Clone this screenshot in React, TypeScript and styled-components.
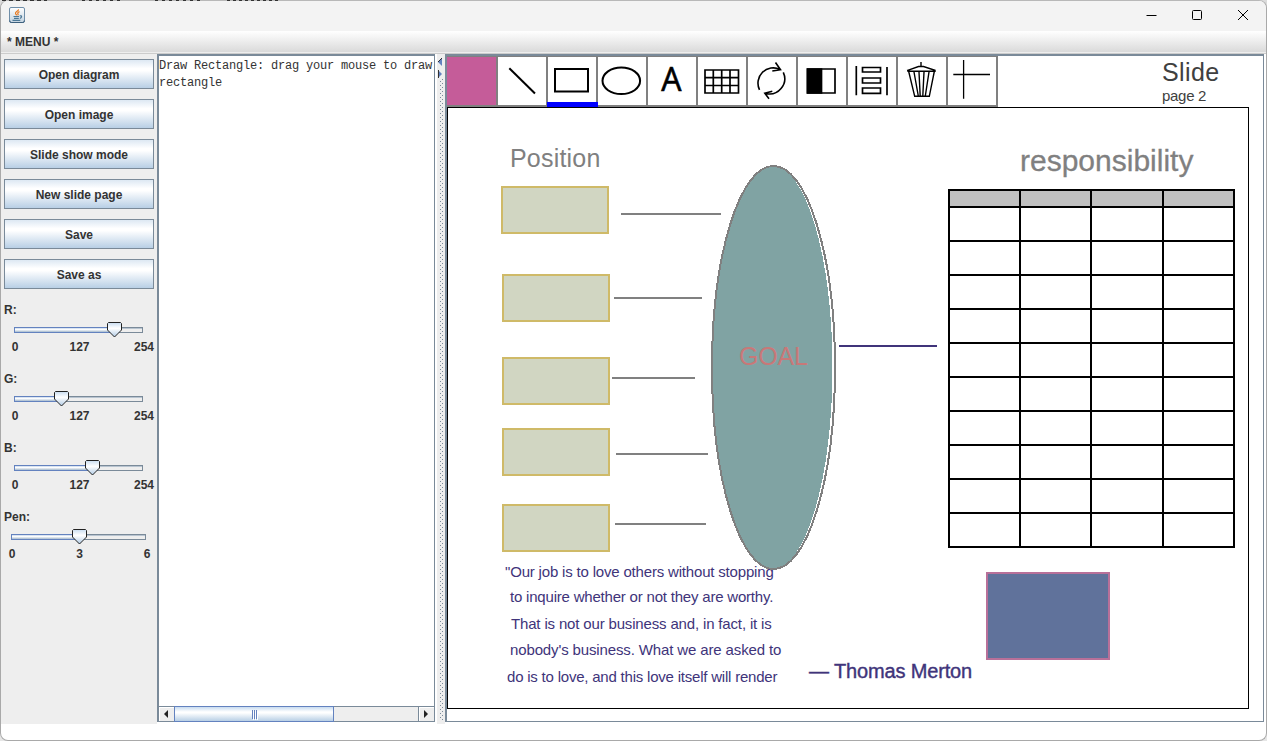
import React from 'react';
import styled, { createGlobalStyle, css } from 'styled-components';

const steel = '#7a8a99';
const grey = '#808080';
const indigo = '#40347a';

const GlobalStyle = createGlobalStyle`
  * { box-sizing: border-box; }
  body { margin: 0; background: #e9e9e9; overflow: hidden; }
`;

const Backdrop = styled.div`
  position: relative;
  width: 1267px;
  height: 741px;
  background: linear-gradient(#dcdcdc 0 50%, #e6e6e6 50%);
  font-family: 'Liberation Sans', Arial, sans-serif;
  color: #333;
`;

const BehindText = styled.div`
  position: absolute;
  top: 0;
  left: 0;
  width: 282px;
  height: 1px;
  background:
    repeating-linear-gradient(90deg, #333 0 4px, transparent 4px 7px) 2px 0 / 45px 1px no-repeat,
    repeating-linear-gradient(90deg, #333 0 3px, transparent 3px 7px) 82px 0 / 40px 1px no-repeat,
    repeating-linear-gradient(90deg, #333 0 3px, transparent 3px 7px) 155px 0 / 48px 1px no-repeat,
    repeating-linear-gradient(90deg, #333 0 3px, transparent 3px 6px) 227px 0 / 54px 1px no-repeat;
`;

const Window = styled.div`
  display: flex;
  flex-direction: column;
  width: 1267px;
  height: 741px;
  border: 1px solid #a9a9a9;
  border-top-color: #b8b8b8;
  border-radius: 8px;
  background: #fff;
  overflow: hidden;
`;

const TitleBar = styled.header`
  display: flex;
  flex: none;
  height: 30px;
  padding: 0 17px 2px 8px;
  align-items: center;
  justify-content: space-between;
  background: #f3f3f3;
`;

const WindowControls = styled.div`
  display: flex;
  gap: 34px;
  align-items: center;
`;

const MenuBar = styled.nav`
  flex: none;
  height: 23px;
  padding-left: 6px;
  background: linear-gradient(#fff, #dadada 21px, #eee 21px 22px, #ccc 22px);
  font-size: 12px;
  font-weight: bold;
  line-height: 22px;
`;

const Content = styled.main`
  display: grid;
  grid-template-columns: 156px 280px 8px 821px;
  flex: none;
  height: 670px;
`;

const Sidebar = styled.aside`
  padding: 5px 3px 0;
  background: #eee;
  font-size: 12px;
  font-weight: bold;
`;

const ButtonStack = styled.div`
  display: flex;
  flex-direction: column;
  gap: 10px;
  margin-bottom: 13px;
`;

const SwingButton = styled.button`
  width: 150px;
  height: 30px;
  padding: 2px 0 0;
  border: 1px solid ${steel};
  background: linear-gradient(#dde8f3 0, #fff 30%, #fff 38%, #b8cfe5 100%);
  color: #333;
  font: bold 12px 'Liberation Sans', Arial, sans-serif;
`;

const SliderBlock = styled.div`
  height: 69px;
  line-height: 16px;
`;

const SliderBody = styled.div<{ $indent: number; $width: number }>`
  width: ${(p) => p.$width}px;
  margin-left: ${(p) => p.$indent}px;
`;

const SliderRow = styled.div`
  position: relative;
  height: 21px;
  padding-top: 9px;
`;

const Track = styled.div`
  height: 6px;
  border: 1px solid ${steel};
  background: linear-gradient(#b8c4d0 1px, #eee 1px);
`;

const Fill = styled.div`
  position: relative;
  top: -1px;
  left: -1px;
  height: 6px;
  border: 1px solid #6382bf;
  background: linear-gradient(#c8d8ec, #fff 40%, #a3b8cc);
`;

const Thumb = styled.svg`
  position: absolute;
  top: 4px;
  width: 15px;
  height: 16px;
  margin-left: -7px;
`;

const Scale = styled.div`
  display: flex;
  justify-content: space-between;
  padding-left: 1px;
  margin-right: -1px;
`;

const Tick = styled.span`
  display: flex;
  justify-content: center;
  width: 0;
`;

const LogPane = styled.section`
  display: flex;
  flex-direction: column;
  width: 278px;
  height: 668px;
  border: solid ${steel};
  border-width: 2px 1px 0 2px;
`;

const LogText = styled.div`
  flex: 1;
  overflow: hidden;
  white-space: pre;
  padding: 2px 0 0 0;
  font: 12px/17px 'Liberation Mono', 'Courier New', monospace;
  letter-spacing: -0.2px;
`;

const ScrollBar = styled.div`
  display: flex;
  height: 16px;
  border: solid ${steel};
  border-width: 1px 0;
  background: #eee;
`;

const ScrollArrow = styled.div<{ $side: 'left' | 'right' }>`
  display: flex;
  width: 15px;
  padding-right: 1px;
  align-items: center;
  justify-content: center;
  background: #eee;
  box-shadow: inset 1px 1px #fff;
  ${(p) =>
    p.$side === 'right' &&
    css`
      width: 16px;
      margin-left: auto;
      border-left: 1px solid ${steel};
    `}
`;

const ScrollThumb = styled.div`
  display: flex;
  gap: 1px;
  width: 160px;
  height: 16px;
  margin-top: -1px;
  align-items: center;
  justify-content: center;
  border: 1px solid #6382bf;
  background: linear-gradient(#c8dcf0, #fff 35%, #fff 42%, #b8cfe5);
`;

const Grip = styled.i`
  width: 1px;
  height: 9px;
  background: #6382bf;
  box-shadow: 1px 1px #fff;
`;

const Divider = styled.div`
  padding: 3px 0 0 1px;
  background: #eee;

  svg {
    display: block;
  }
`;

const SlidePane = styled.section`
  width: 819px;
  height: 668px;
  border: solid ${steel};
  border-width: 2px 1px 1px 2px;
`;

const SlideHeader = styled.div`
  display: flex;
  height: 51px;
`;

const Toolbar = styled.div`
  display: flex;
  width: 551px;
  height: 51px;
  border: solid ${grey};
  border-width: 1px 1px 2px 0;
`;

const Swatch = styled.div`
  width: 50px;
  height: 48px;
  border-right: 1px solid ${grey};
  background: #c55c99;
`;

const Tool = styled.div<{ $selected?: boolean }>`
  position: relative;
  width: 50px;
  height: 48px;
  box-shadow: inset 1px 0 ${grey}, inset -1px 0 ${grey};

  svg {
    display: block;
    overflow: visible;
    fill: none;
    stroke: #000;
  }

  ${(p) =>
    p.$selected &&
    css`
      &::after {
        content: '';
        position: absolute;
        left: 0;
        bottom: -2px;
        width: 51px;
        height: 5px;
        background: #0000ff;
        z-index: 1;
      }
    `}
`;

const PageInfo = styled.div`
  padding: 4px 0 0 164px;
  color: #404040;
`;

const PageTitle = styled.div`
  font-size: 25px;
  line-height: 25px;
  letter-spacing: 0.4px;
`;

const PageNumber = styled.div`
  margin-top: 3px;
  font-size: 15px;
  line-height: 16px;
  letter-spacing: -0.3px;
`;

const Canvas = styled.div`
  position: relative;
  width: 802px;
  height: 602px;
  border: 1px solid #000;
`;

/* Positions on the slide count from the outer corner of its frame. */
const at = css<{ $x: number; $y: number }>`
  position: absolute;
  left: ${(p) => p.$x - 1}px;
  top: ${(p) => p.$y - 1}px;
`;

const Box = styled.div<{ $x: number; $y: number; $w?: number; $h?: number; $fill?: string; $line?: string }>`
  ${at}
  width: ${(p) => p.$w ?? 108}px;
  height: ${(p) => p.$h ?? 48}px;
  border: 2px solid ${(p) => p.$line ?? '#cfba68'};
  background: ${(p) => p.$fill ?? '#d1d6c2'};
`;

const Stroke = styled.div<{ $x: number; $y: number; $w: number; $color?: string }>`
  ${at}
  width: ${(p) => p.$w}px;
  height: 2px;
  background: ${(p) => p.$color ?? grey};
`;

const Oval = styled.svg<{ $x: number; $y: number }>`
  ${at}
`;

const Label = styled.div<{ $x: number; $y: number; $size: number; $color: string; $spacing?: number; $bold?: number }>`
  ${at}
  font-size: ${(p) => p.$size}px;
  line-height: ${(p) => p.$size}px;
  letter-spacing: ${(p) => p.$spacing ?? 0}px;
  color: ${(p) => p.$color};
  white-space: pre;
  -webkit-text-stroke: ${(p) => p.$bold ?? 0}px ${(p) => p.$color};
`;

const Table = styled.div<{ $x: number; $y: number }>`
  ${at}
  display: grid;
  grid-template-columns: 69px 69px 70px 69px;
  grid-template-rows: 15px repeat(10, 32px);
  gap: 2px;
  padding: 2px;
  background: #000;
`;

const Cell = styled.div<{ $head: boolean }>`
  background: ${(p) => (p.$head ? '#c0c0c0' : '#fff')};
`;

const buttons = ['Open diagram', 'Open image', 'Slide show mode', 'New slide page', 'Save', 'Save as'];

const sliders = [
  { name: 'R:', ticks: ['0', '127', '254'], pos: 100, indent: 10, width: 129 },
  { name: 'G:', ticks: ['0', '127', '254'], pos: 47, indent: 10, width: 129 },
  { name: 'B:', ticks: ['0', '127', '254'], pos: 78, indent: 10, width: 129 },
  { name: 'Pen:', ticks: ['0', '3', '6'], pos: 68, indent: 7, width: 135 },
];

const boxes = [
  [54, 79],
  [55, 167],
  [55, 250],
  [55, 321],
  [55, 397],
];

const strokes = [
  [174, 106, 100],
  [167, 190, 88],
  [165, 270, 83],
  [169, 346, 92],
  [168, 416, 91],
];

const quote = [
  { x: 58, y: 457, s: -0.18, text: '"Our job is to love others without stopping' },
  { x: 63, y: 482, s: -0.2, text: 'to inquire whether or not they are worthy.' },
  { x: 64, y: 509, s: -0.16, text: 'That is not our business and, in fact, it is' },
  { x: 63, y: 535, s: -0.13, text: "nobody's business. What we are asked to" },
  { x: 60, y: 562, s: -0.21, text: 'do is to love, and this love itself will render' },
];

const JavaIcon = () => (
  <svg width="16" height="16" viewBox="0 0 16 16" fill="none">
    <defs>
      <linearGradient id="cupTile" x1="0" y1="0" x2="0" y2="1">
        <stop offset="0" stopColor="#fff" />
        <stop offset="1" stopColor="#c3d3e0" />
      </linearGradient>
    </defs>
    <rect x=".5" y=".5" width="15" height="15" rx="1.5" fill="url(#cupTile)" stroke="#6f8ea8" />
    <path d="M.8 13.5V14q0 1.5 1.5 1.5h11.5q1.5 0 1.5-1.5v-.5" stroke="#3c5f7c" />
    <path d="M9.5 2.3C10 4 6.3 4.600 6.500 6.300c.1 1 1 1.300 1.100 2M10.500 4.600C8.600 5.400 8.400 6 9 6.800c.4.6 0 1.200-.4 1.500" stroke="#e8781e" strokeWidth="1.200" />
    <path d="M4.500 9.500h5.600M5 11.300h4.800M3.500 13.300h7.800M10.800 8.800c2.200-.5 2.500 1.700 0 2.700" stroke="#4c7896" strokeWidth="1.200" />
  </svg>
);

const Slider = ({ name, ticks, pos, indent, width }: (typeof sliders)[number]) => (
  <SliderBlock>
    <div>{name}</div>
    <SliderBody $indent={indent} $width={width}>
      <SliderRow>
        <Track>
          <Fill style={{ width: pos }} />
        </Track>
        <Thumb viewBox="0 0 15 16" style={{ left: pos }}>
          <defs>
            <linearGradient id="thumb" x1="0" y1="0" x2="0" y2="1">
              <stop offset="0" stopColor="#c8dcf0" />
              <stop offset=".4" stopColor="#fff" />
              <stop offset="1" stopColor="#b0cae4" />
            </linearGradient>
          </defs>
          <path d="M1.500.5h12l1 1v6.500l-7 7-7-7V1.500z" fill="url(#thumb)" stroke="#222" />
        </Thumb>
      </SliderRow>
      <Scale>
        {ticks.map((t) => (
          <Tick key={t}>{t}</Tick>
        ))}
      </Scale>
    </SliderBody>
  </SliderBlock>
);

const ToolIcon = ({ children }: { children: React.ReactNode }) => (
  <svg width="50" height="48" viewBox="0 0 50 48" strokeWidth="2">
    {children}
  </svg>
);

export default function App() {
  return (
    <Backdrop>
      <GlobalStyle />
      <BehindText />
      <Window>
        <TitleBar>
          <JavaIcon />
          <WindowControls>
            <svg width="12" height="12" viewBox="0 0 12 12" stroke="#000">
              <path d="M1.500 6.500h10" />
            </svg>
            <svg width="12" height="12" viewBox="0 0 12 12" stroke="#000" fill="none">
              <rect x="1.500" y="1.500" width="9" height="9" rx="1" />
            </svg>
            <svg width="12" height="12" viewBox="0 0 12 12" stroke="#000">
              <path d="M1 1l10 10M11 1L1 11" />
            </svg>
          </WindowControls>
        </TitleBar>
        <MenuBar>* MENU *</MenuBar>
        <Content>
          <Sidebar>
            <ButtonStack>
              {buttons.map((b) => (
                <SwingButton key={b}>{b}</SwingButton>
              ))}
            </ButtonStack>
            {sliders.map((s) => (
              <Slider key={s.name} {...s} />
            ))}
          </Sidebar>
          <LogPane>
            <LogText>{'Draw Rectangle: drag your mouse to draw\nrectangle'}</LogText>
            <ScrollBar>
              <ScrollArrow $side="left">
                <svg width="4" height="8" viewBox="0 0 4 8" fill="#222">
                  <path d="M4 0v8L0 4z" />
                </svg>
              </ScrollArrow>
              <ScrollThumb>
                <Grip />
                <Grip />
                <Grip />
              </ScrollThumb>
              <ScrollArrow $side="right">
                <svg width="4" height="8" viewBox="0 0 4 8" fill="#222">
                  <path d="M0 0v8l4-4z" />
                </svg>
              </ScrollArrow>
            </ScrollBar>
          </LogPane>
          <Divider>
            <svg width="7" height="667" viewBox="0 0 7 667">
              <defs>
                <pattern id="bumps" width="4" height="4" patternUnits="userSpaceOnUse">
                  <rect x="2" y="0" width="1" height="1" fill={steel} />
                  <rect x="0" y="2" width="1" height="1" fill={steel} />
                </pattern>
              </defs>
              <rect x="2" y="22" width="4" height="642" fill="url(#bumps)" />
              <path d="M4 1v8L0 5z" fill="#6382bf" />
              <path d="M4 1L0 5" stroke="#333" />
              <path d="M0 13v8l4-4z" fill="#6382bf" />
              <path d="M.5 13v8" stroke="#333" />
            </svg>
          </Divider>
          <SlidePane>
            <SlideHeader>
              <Toolbar>
                <Swatch />
                <Tool>
                  <ToolIcon>
                    <path d="M12.300 11.300L38 36.500" />
                  </ToolIcon>
                </Tool>
                <Tool $selected>
                  <ToolIcon>
                    <rect x="8" y="12" width="33" height="22.500" />
                  </ToolIcon>
                </Tool>
                <Tool>
                  <ToolIcon>
                    <ellipse cx="24.300" cy="23.800" rx="18.800" ry="13.300" />
                  </ToolIcon>
                </Tool>
                <Tool>
                  <ToolIcon>
                    <text
                      x="24.300"
                      y="33.500"
                      textAnchor="middle"
                      fontFamily="'Open Sans', sans-serif"
                      fontSize="32"
                      fill="#000"
                      strokeWidth=".6"
                    >
                      A
                    </text>
                  </ToolIcon>
                </Tool>
                <Tool>
                  <ToolIcon>
                    <path d="M8 13h33.500v23H8zM16.300 13v23M24.700 13v23M33 13v23M8 20.700h33.500M8 28.500h33.500" strokeWidth="1.700" />
                  </ToolIcon>
                </Tool>
                <Tool>
                  <ToolIcon>
                    <path
                      d="M12.500 32.800A15.300 15.300 0 0 1 33 12.400M28.500 5.500l5 7.200-8.200 1.300M36.300 15.300A15.300 15.300 0 0 1 18.500 36.400M25.300 34.200l-7.500 2 4.200 5.500"
                      strokeWidth="1.600"
                    />
                  </ToolIcon>
                </Tool>
                <Tool>
                  <ToolIcon>
                    <path d="M10.500 12h14v24h-14z" fill="#000" strokeWidth="1.700" />
                    <path d="M10.500 12h27.500v24H10.500z" strokeWidth="1.700" />
                  </ToolIcon>
                </Tool>
                <Tool>
                  <ToolIcon>
                    <path
                      d="M9.300 9v29.300M40 10v28.300M15.500 10.500h18v4.500h-18zM15.500 21h18v5h-18zM15.500 31h18v5.300h-18z"
                      strokeWidth="1.700"
                    />
                  </ToolIcon>
                </Tool>
                <Tool>
                  <ToolIcon>
                    <path
                      d="M24 5v4.300M10.700 13.300L21.500 9.500h5L38 13.300v1H11zM11.700 14.500l6 24.800h14.600l5-24.800M17 15l4.300 24M22 15l1.200 24M27 15l-1.200 24M32 15l-3.700 24"
                      strokeWidth="1.400"
                    />
                  </ToolIcon>
                </Tool>
                <Tool>
                  <ToolIcon>
                    <path d="M16.600 3v38.700M6.300 17.500H43" strokeWidth="1.300" />
                  </ToolIcon>
                </Tool>
              </Toolbar>
              <PageInfo>
                <PageTitle>Slide</PageTitle>
                <PageNumber>page 2</PageNumber>
              </PageInfo>
            </SlideHeader>
            <Canvas>
              <Label $x={63} $y={39} $size={25} $color={grey} $spacing={0.2}>
                Position
              </Label>
              <Label $x={573} $y={39} $size={30} $color={grey} $bold={0.3}>
                responsibility
              </Label>
              {boxes.map(([x, y]) => (
                <Box key={y} $x={x} $y={y} />
              ))}
              {strokes.map(([x, y, w]) => (
                <Stroke key={y} $x={x} $y={y} $w={w} />
              ))}
              {quote.map((q) => (
                <Label key={q.y} $x={q.x} $y={q.y} $size={15} $color={indigo} $spacing={q.s}>
                  {q.text}
                </Label>
              ))}
              <Oval $x={264} $y={58} width="126" height="406" viewBox="0 0 126 406" shapeRendering="crispEdges">
                <ellipse cx="61.500" cy="202.500" rx="60" ry="201.500" fill="#80a3a3" />
                <ellipse cx="62.500" cy="202.500" rx="61.500" ry="201.500" fill="none" stroke={grey} strokeWidth="2" />
              </Oval>
              <Label $x={292} $y={237} $size={25} $color="#c87878" $spacing={-0.2}>
                GOAL
              </Label>
              <Stroke $x={392} $y={238} $w={98} $color={indigo} />
              <Table $x={501} $y={82}>
                {Array.from({ length: 44 }, (_, i) => (
                  <Cell key={i} $head={i < 4} />
                ))}
              </Table>
              <Box $x={539} $y={465} $w={124} $h={88} $fill="#60729b" $line="#b87099" />
              <Label $x={362} $y={554} $size={20} $color={indigo} $bold={0.4} $spacing={-0.15}>
                — Thomas Merton
              </Label>
            </Canvas>
          </SlidePane>
        </Content>
      </Window>
    </Backdrop>
  );
}
